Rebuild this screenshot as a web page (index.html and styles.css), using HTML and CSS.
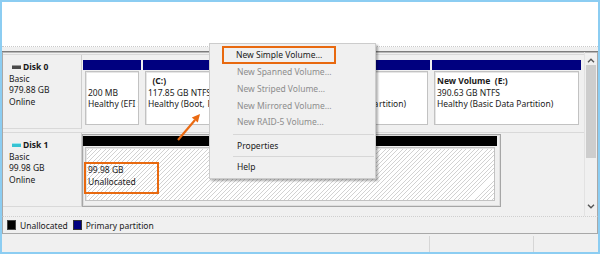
FILE: index.html
```html
<!DOCTYPE html>
<html lang="en">
<head>
    <meta charset="UTF-8">
    <title>Disk Management</title>
    <link rel="stylesheet" href="styles.css">
</head>
<body>
    <div class="window">
        <div class="top-pane"></div>
        <div class="splitter"></div>

        <div class="disk-pane">
            <div class="disk-list">
                <!-- Disk 0 -->
                <div class="disk-row">
                    <div class="disk-info">
                        <div class="disk-name"><span class="drive"></span>Disk 0</div>
                        <div>Basic</div>
                        <div>979.88 GB</div>
                        <div>Online</div>
                    </div>
                    <div class="parts">
                        <div class="part w-efi">
                            <div class="bar primary"></div>
                            <div class="vol">
                                <div>&nbsp;</div>
                                <div>200 MB</div>
                                <div>Healthy (EFI System Partition)</div>
                            </div>
                        </div>
                        <div class="part w-sys">
                            <div class="bar primary"></div>
                            <div class="vol">
                                <div class="label">&nbsp;&nbsp;(C:)</div>
                                <div>117.85 GB NTFS</div>
                                <div>Healthy (Boot,<span class="wide"> Page File, Crash Dump, Basic Data Pa</span>rtition)</div>
                            </div>
                        </div>
                        <div class="part w-data">
                            <div class="bar primary"></div>
                            <div class="vol">
                                <div class="label">New Volume&nbsp; (E:)</div>
                                <div>390.63 GB NTFS</div>
                                <div>Healthy (Basic Data Partition)</div>
                            </div>
                        </div>
                    </div>
                </div>

                <!-- Disk 1 -->
                <div class="disk-row">
                    <div class="disk-info">
                        <div class="disk-name"><span class="drive new"></span>Disk 1</div>
                        <div>Basic</div>
                        <div>99.98 GB</div>
                        <div>Online</div>
                    </div>
                    <div class="parts">
                        <div class="part sel w-free">
                            <div class="bar unalloc"></div>
                            <div class="vol hatched">
                                <div class="mark">
                                    <div>99.98 GB</div>
                                    <div>Unallocated</div>
                                </div>
                            </div>
                        </div>
                    </div>
                </div>
            </div>

            <div class="vscroll">
                <div class="sbtn">
                    <svg width="8" height="5" viewBox="0 0 8 5"><polyline points="1,4.2 4,1.2 7,4.2" fill="none" stroke="#555" stroke-width="1.4"/></svg>
                </div>
                <div class="thumb"></div>
                <div class="sbtn">
                    <svg width="8" height="5" viewBox="0 0 8 5"><polyline points="1,0.8 4,3.8 7,0.8" fill="none" stroke="#555" stroke-width="1.4"/></svg>
                </div>
            </div>
        </div>

        <div class="legend">
            <span class="swatch unalloc"></span>Unallocated
            <span class="swatch primary"></span>Primary partition
        </div>

        <div class="status">
            <div class="cell c1"></div>
            <div class="cell c2"></div>
            <div class="cell c3"></div>
        </div>

        <!-- context menu over the unallocated space -->
        <div class="menu">
            <div class="item"><span class="hl">New Simple Volume...</span></div>
            <div class="item off">New Spanned Volume...</div>
            <div class="item off">New Striped Volume...</div>
            <div class="item off">New Mirrored Volume...</div>
            <div class="item off">New RAID-5 Volume...</div>
            <div class="sep"></div>
            <div class="item">Properties</div>
            <div class="sep"></div>
            <div class="item">Help</div>
        </div>

        <svg class="arrow" width="36" height="36" viewBox="0 0 36 36">
            <line x1="6" y1="32" x2="23" y2="12" stroke="#ea6a12" stroke-width="2.2"/>
            <polygon points="28,6 25.8,14.6 19.8,9.6" fill="#ea6a12"/>
        </svg>
    </div>
</body>
</html>
```

FILE: styles.css
```css
body {
    margin: 0;
    font-family: "Noto Sans", "Open Sans", sans-serif;
    font-size: 8.5px;
    color: #1a1a1a;
}
.window {
    position: relative;
    width: 600px;
    height: 254px;
    box-sizing: border-box;
    border: 2px solid #8ccdf2;
    background-color: #f0f0f0;
    display: flex;
    flex-direction: column;
    overflow: hidden;
}
.top-pane {
    height: 44px;
    background-color: #fff;
    border-bottom: 1px dotted #c9c9c9;
}
.splitter {
    height: 4px;
    border-bottom: 1px solid #7c7c7c;
    box-shadow: 0 1px 0 #b8b8b8;
}
.disk-pane {
    height: 164px;
    display: flex;
    border-left: 1px solid #a8a8a8;
    border-right: 1px solid #a8a8a8;
}
.disk-list {
    flex: 1;
    padding-top: 2px;
}
.disk-row {
    display: flex;
    height: 75px;
    box-sizing: border-box;
    border-top: 1px solid #d9d9d9;
    margin-bottom: 3px;
    line-height: 11.7px;
}
.disk-info {
    width: 79px;
    box-sizing: border-box;
    padding: 6px 0 0 6px;
    border-right: 1px solid #cdcdcd;
    border-bottom: 1px solid #d9d9d9;
}
.disk-name {
    font-weight: bold;
    padding-left: 3px;
    display: flex;
    align-items: center;
}
.drive {
    width: 9px;
    height: 3px;
    margin-right: 2px;
    background-color: #4a4a4a;
    border-top: 1px solid #9a9a9a;
}
.drive.new {
    background-color: #36c3d3;
    border-top-color: #9be6ee;
}
.parts {
    flex: 1;
    display: flex;
    align-items: flex-start;
    padding-top: 1px;
}
.part {
    border: 1px solid transparent;
    padding-top: 3px;
}
.part.sel {
    padding: 1px 3px 5px 0;
    border-color: #a6a6a6;
    box-shadow: inset 0 0 0 1px #dedede;
}
.w-efi { width: 58px; }
.w-sys { width: 287px; }
.w-data { width: 149px; }
.w-free { width: 414px; }
.bar {
    height: 10px;
}
.primary {
    background-color: #00007f;
}
.unalloc {
    background-color: #000;
}
.vol {
    height: 54px;
    box-sizing: border-box;
    margin: 1px 2px 0;
    padding: 3px 2px 0;
    background-color: #fff;
    border: 1px solid #c2c2c2;
    box-shadow: inset 1px 1px 0 #e6e6e6;
    white-space: nowrap;
    overflow: hidden;
}
.label {
    font-weight: bold;
}
.wide {
    letter-spacing: 0.65px;
}
.hatched {
    margin-top: 1px;
    padding-top: 14px;
    background: repeating-linear-gradient(135deg, #fff 0, #fff 2.3px, #d2d2d2 2.3px, #d2d2d2 3px);
    overflow: visible;
}
.mark {
    width: 69px;
    margin-left: -4px;
    padding: 0 0 4px 2px;
    border: 2px solid #e8690f;
    line-height: 12px;
}
.vscroll {
    width: 12px;
    padding-top: 3px;
    display: flex;
    flex-direction: column;
    border-left: 1px solid #e2e2e2;
}
.sbtn {
    height: 10px;
    display: flex;
    align-items: center;
    justify-content: center;
}
.thumb {
    height: 93px;
    margin: 0 1px;
    background-color: #cdcdcd;
}
.vscroll .sbtn:last-child {
    margin-top: auto;
    margin-bottom: 5px;
}
.legend {
    height: 16px;
    border-top: 1px dotted #cfcfcf;
    border-bottom: 1px solid #a8a8a8;
    border-left: 1px solid #a8a8a8;
    border-right: 1px solid #a8a8a8;
    padding-left: 4px;
    display: flex;
    align-items: center;
}
.swatch {
    width: 7px;
    height: 8px;
    margin-right: 4px;
    border: 1px solid #444;
}
.swatch.primary {
    margin-left: 5px;
    border-color: #333;
}
.status {
    height: 18px;
    display: flex;
}
.cell {
    margin-top: 2px;
}
.c1 { width: 427px; }
.c2 { width: 103px; border-left: 1px solid #d6d6d6; }
.c3 { flex: 1; border-left: 1px solid #d6d6d6; }

.menu {
    position: absolute;
    left: 207px;
    top: 41px;
    width: 165px;
    padding: 3px 0 3px;
    background-color: #f0f0f0;
    border: 1px solid #cccccc;
    box-shadow: 2px 2px 2px rgba(0, 0, 0, 0.3);
}
.item {
    height: 16.6px;
    display: flex;
    align-items: center;
    padding-left: 27px;
    color: #1a1a1a;
}
.item.off {
    color: #8d8d8d;
}
.hl {
    height: 14px;
    line-height: 14px;
    margin-left: -15px;
    padding: 0 12px;
    border: 2px solid #e8690f;
    white-space: nowrap;
}
.sep {
    height: 1px;
    margin: 4px 1px 2px 23px;
    background-color: #d7d7d7;
}
.sep + .item + .sep {
    margin-top: 2px;
}
.arrow {
    position: absolute;
    left: 170px;
    top: 106px;
}
```
